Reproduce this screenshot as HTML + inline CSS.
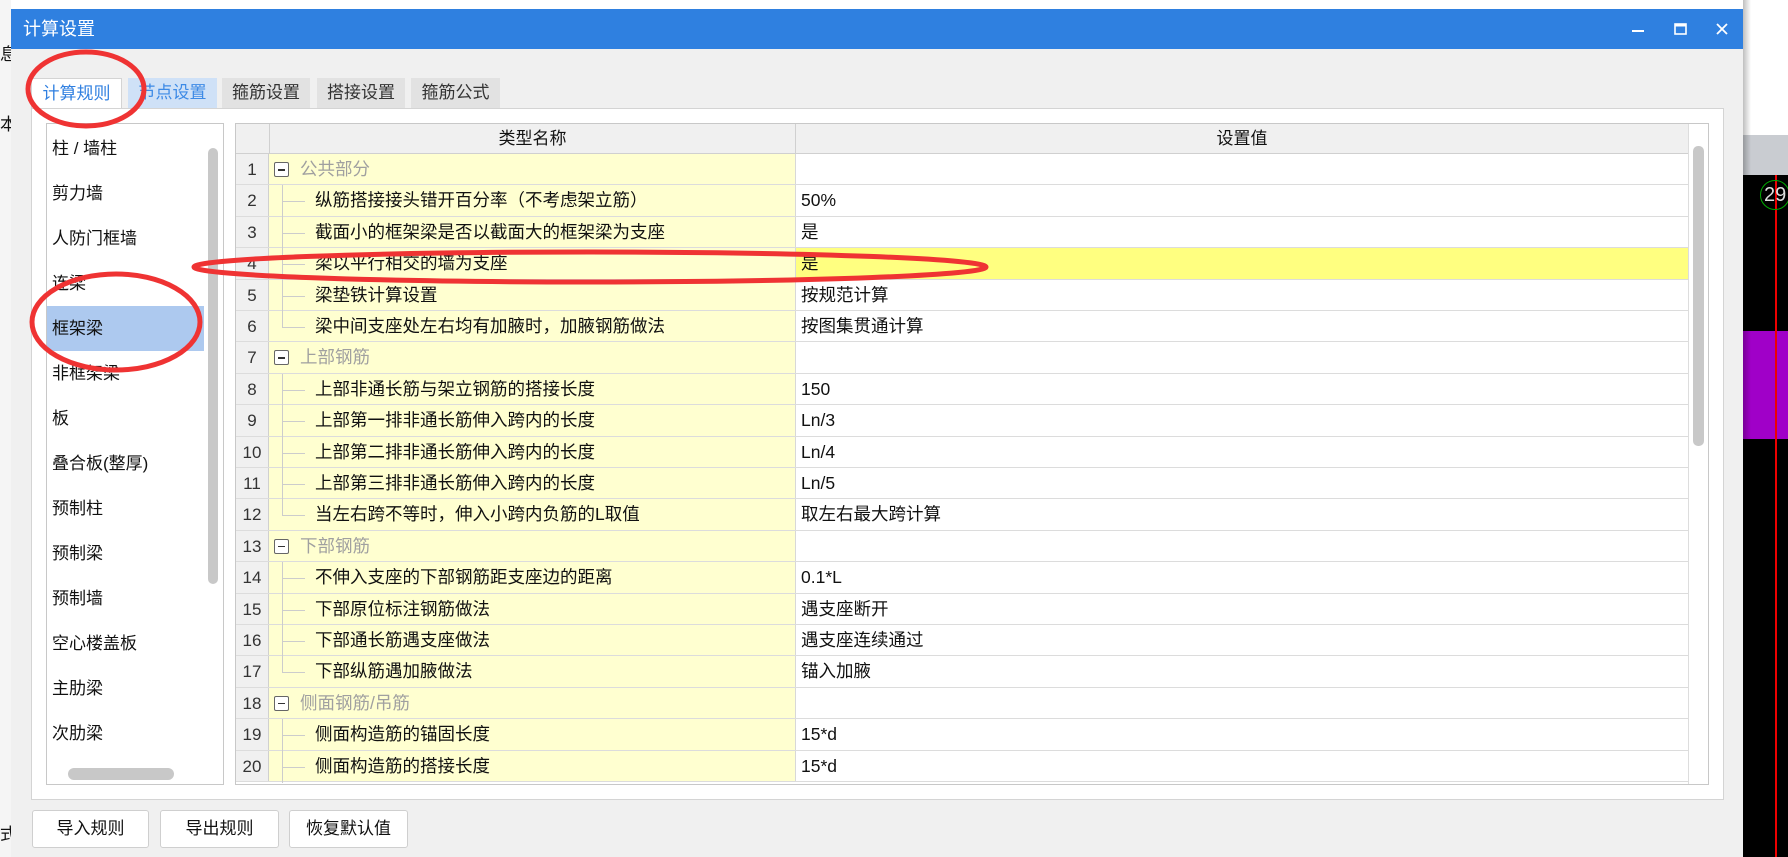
<!DOCTYPE html>
<html><head><meta charset="utf-8"><style>
*{margin:0;padding:0;box-sizing:border-box}
body{width:1788px;height:857px;overflow:hidden;background:#fff;position:relative;font-family:"Liberation Sans","Noto Sans CJK SC",sans-serif;color:#111}
.abs{position:absolute}
.title{left:11px;top:9px;width:1732px;height:40px;background:#2f80e0;color:#fff;font-size:18px;line-height:40px;padding-left:12px}
.body{left:11px;top:49px;width:1732px;height:808px;background:#f0f0f0}
.tab{top:78px;height:30px;font-size:17px;line-height:30px;text-align:center;background:#e2e2e2;color:#333}
.panel{left:31px;top:108px;width:1693px;height:692px;background:#fff;border:1px solid #d4d4d4}
.list{left:46px;top:123px;width:178px;height:662px;border:1px solid #c8c8c8;background:#fff}
.li{position:absolute;left:0;width:157px;height:45px;line-height:45px;padding-left:5px;font-size:17px}
.grid{left:235px;top:123px;width:1474px;height:662px;border:1px solid #c8c8c8;background:#fff;overflow:hidden}
.row{position:absolute;left:0;width:1452px;height:31.4px;border-bottom:1px solid #dcdcdc;font-size:17.5px;line-height:31px}
.num{position:absolute;left:0;width:33px;height:100%;background:#f0f0f0;border-right:1px solid #d0d0d0;text-align:center;color:#333;font-size:17px}
.name{position:absolute;left:33px;width:527px;height:100%;background:#ffffd0;border-right:1px solid #d8d8d8}
.val{position:absolute;left:560px;width:892px;height:100%;padding-left:5px}
.btn{top:810px;height:38px;background:#fff;border:1px solid #cfcfcf;border-radius:3px;font-size:17px;line-height:36px;text-align:center}
</style></head><body>
<div class="abs" style="left:0;top:0;width:11px;height:857px;background:#f5f5f5"></div>
<div class="abs" style="left:0;top:40px;font-size:17px">息</div>
<div class="abs" style="left:0;top:110px;font-size:17px">本</div>
<div class="abs" style="left:0;top:820px;font-size:17px">式</div>
<div class="abs" style="left:1743px;top:0;width:45px;height:135px;background:#fff"></div>
<div class="abs" style="left:1743px;top:135px;width:45px;height:40px;background:#c9ccd1"></div>
<div class="abs" style="left:1743px;top:175px;width:45px;height:682px;background:#000"></div>
<div class="abs" style="left:1743px;top:331px;width:45px;height:108px;background:#a000c8"></div>
<div class="abs" style="left:1775px;top:175px;width:2px;height:682px;background:#e00"></div>
<div class="abs" style="left:1760px;top:180px;width:30px;height:30px;border:1px solid #0a0;border-radius:50%;color:#ddd;font-size:20px;line-height:28px;padding-left:3px">29</div>
<div class="abs" style="left:1743px;top:0;width:8px;height:857px;background:linear-gradient(90deg,rgba(0,0,0,.25),rgba(0,0,0,0))"></div>

<div class="abs title">计算设置</div>
<svg class="abs" style="left:1625px;top:18px" width="110" height="24">
<rect x="7" y="12" width="12" height="2" fill="#fff"/>
<rect x="50" y="6" width="11" height="10" fill="none" stroke="#fff" stroke-width="1.6"/><rect x="50" y="6" width="11" height="2.5" fill="#fff"/>
<path d="M92 6 L102 16 M102 6 L92 16" stroke="#fff" stroke-width="1.8"/>
</svg>
<div class="abs body"></div>

<div class="abs tab" style="left:31px;width:91px;background:#fff;color:#2f7fe0;border:1px solid #d4d4d4;border-bottom:none;height:31px">计算规则</div>
<div class="abs tab" style="left:128px;width:89px;background:#cfe1f7;color:#3d8ae6">节点设置</div>
<div class="abs tab" style="left:222px;width:88px">箍筋设置</div>
<div class="abs tab" style="left:317px;width:88px">搭接设置</div>
<div class="abs tab" style="left:411px;width:89px">箍筋公式</div>

<div class="abs panel"></div>
<div class="abs list">
<div class="li" style="top:2px">柱 / 墙柱</div>
<div class="li" style="top:47px">剪力墙</div>
<div class="li" style="top:92px">人防门框墙</div>
<div class="li" style="top:137px">连梁</div>
<div class="li" style="top:182px;background:#adc9ef">框架梁</div>
<div class="li" style="top:227px">非框架梁</div>
<div class="li" style="top:272px">板</div>
<div class="li" style="top:317px">叠合板(整厚)</div>
<div class="li" style="top:362px">预制柱</div>
<div class="li" style="top:407px">预制梁</div>
<div class="li" style="top:452px">预制墙</div>
<div class="li" style="top:497px">空心楼盖板</div>
<div class="li" style="top:542px">主肋梁</div>
<div class="li" style="top:587px">次肋梁</div>
<div class="abs" style="left:161px;top:24px;width:10px;height:436px;background:#c8c8c8;border-radius:5px"></div>
<div class="abs" style="left:21px;top:644px;width:106px;height:12px;background:#c8c8c8;border-radius:6px"></div>
</div>

<div class="abs grid">
<div class="abs" style="left:0;top:0;width:1452px;height:30px;background:#f0f0f0;border-bottom:1px solid #d0d0d0;font-size:17px;line-height:30px">
<div class="abs" style="left:33px;width:527px;height:30px;border-left:1px solid #d0d0d0;border-right:1px solid #d0d0d0;text-align:center">类型名称</div>
<div class="abs" style="left:560px;width:892px;text-align:center">设置值</div>
</div>
<div class="abs" style="left:1452px;top:0;width:22px;height:662px;background:#fff;border-left:1px solid #ddd"></div>
<div class="abs" style="left:1457px;top:22px;width:11px;height:300px;background:#c8c8c8;border-radius:5px"></div>
<div id="rows"></div>
</div>

<div class="abs btn" style="left:32px;width:117px">导入规则</div>
<div class="abs btn" style="left:160px;width:119px">导出规则</div>
<div class="abs btn" style="left:289px;width:119px">恢复默认值</div>

<svg class="abs" style="left:0;top:0" width="1788" height="857">
<g fill="none" stroke="#ef3333" stroke-width="5">
<ellipse cx="86" cy="89" rx="58" ry="37"/>
<ellipse cx="590" cy="267" rx="396" ry="15"/>
<ellipse cx="116" cy="322" rx="84" ry="48"/>
</g></svg>

<script>
var d=[["g","公共部分",""],["c","纵筋搭接接头错开百分率（不考虑架立筋）","50%"],["c","截面小的框架梁是否以截面大的框架梁为支座","是"],["c","梁以平行相交的墙为支座","是"],["c","梁垫铁计算设置","按规范计算"],["l","梁中间支座处左右均有加腋时，加腋钢筋做法","按图集贯通计算"],
["g","上部钢筋",""],["c","上部非通长筋与架立钢筋的搭接长度","150"],["c","上部第一排非通长筋伸入跨内的长度","Ln/3"],["c","上部第二排非通长筋伸入跨内的长度","Ln/4"],["c","上部第三排非通长筋伸入跨内的长度","Ln/5"],["l","当左右跨不等时，伸入小跨内负筋的L取值","取左右最大跨计算"],
["g","下部钢筋",""],["c","不伸入支座的下部钢筋距支座边的距离","0.1*L"],["c","下部原位标注钢筋做法","遇支座断开"],["c","下部通长筋遇支座做法","遇支座连续通过"],["l","下部纵筋遇加腋做法","锚入加腋"],
["g","侧面钢筋/吊筋",""],["c","侧面构造筋的锚固长度","15*d"],["c","侧面构造筋的搭接长度","15*d"]];
var h="";
d.forEach(function(r,i){
var top=30+i*31.4;var hl=(i==3)?"background:#ffff80;":"";
var nm="";
if(r[0]=="g"){nm='<div style="position:absolute;left:5px;top:8px;width:15px;height:15px;border:1px solid #666;border-radius:2px;background:#fff"><div style="position:absolute;left:3px;top:6px;width:7px;height:1.5px;background:#333"></div></div><div style="position:absolute;left:31px;color:#a0a0a0">'+r[1]+'</div>';}
else{var vh=r[0]=="l"?"height:16px;":"height:32px;";
nm='<div style="position:absolute;left:13px;top:0;width:1px;'+vh+'background:#ccc"></div><div style="position:absolute;left:13px;top:16px;width:23px;height:1px;background:#ccc"></div><div style="position:absolute;left:46px">'+r[1]+'</div>';}
h+='<div class="row" style="top:'+top+'px"><div class="num">'+(i+1)+'</div><div class="name">'+nm+'</div><div class="val" style="'+hl+'">'+r[2]+'</div></div>';
});
document.getElementById("rows").innerHTML=h;
</script>
</body></html>
